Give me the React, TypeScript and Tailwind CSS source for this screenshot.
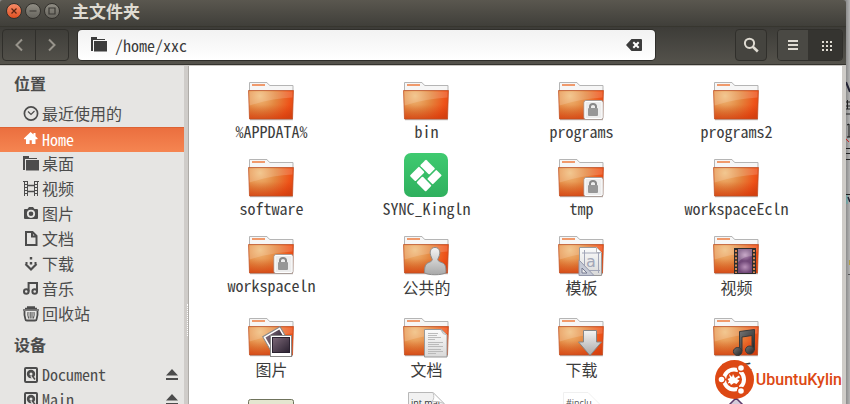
import { useState, type ReactNode } from 'react';

type SideIconName =
  | 'recent'
  | 'home'
  | 'folder'
  | 'film'
  | 'camera'
  | 'document'
  | 'download'
  | 'music'
  | 'trash'
  | 'disk';

type Emblem = 'lock' | 'person' | 'template' | 'film' | 'photos' | 'document' | 'download' | 'music';

interface FileEntry {
  name: string;
  cjk?: boolean;
  emblem?: Emblem;
  icon?: 'sync' | 'image' | 'source' | 'header' | 'diamond';
}

const places: { name: string; icon: SideIconName }[] = [
  { name: '最近使用的', icon: 'recent' },
  { name: 'Home', icon: 'home' },
  { name: '桌面', icon: 'folder' },
  { name: '视频', icon: 'film' },
  { name: '图片', icon: 'camera' },
  { name: '文档', icon: 'document' },
  { name: '下载', icon: 'download' },
  { name: '音乐', icon: 'music' },
  { name: '回收站', icon: 'trash' },
];

const devices = ['Document', 'Main'];

const files: FileEntry[] = [
  { name: '%APPDATA%' },
  { name: 'bin' },
  { name: 'programs', emblem: 'lock' },
  { name: 'programs2' },
  { name: 'software' },
  { name: 'SYNC_Kingln', icon: 'sync' },
  { name: 'tmp', emblem: 'lock' },
  { name: 'workspaceEcln' },
  { name: 'workspaceln', emblem: 'lock' },
  { name: '公共的', cjk: true, emblem: 'person' },
  { name: '模板', cjk: true, emblem: 'template' },
  { name: '视频', cjk: true, emblem: 'film' },
  { name: '图片', cjk: true, emblem: 'photos' },
  { name: '文档', cjk: true, emblem: 'document' },
  { name: '下载', cjk: true, emblem: 'download' },
  { name: '音乐', cjk: true, emblem: 'music' },
  { name: '', icon: 'image' },
  { name: '', icon: 'source' },
  { name: '', icon: 'header' },
  { name: '', icon: 'diamond' },
];

const sideIcons: Record<SideIconName, ReactNode> = {
  recent: (
    <g fill="none" stroke="currentColor">
      <circle cx="8" cy="7.500" r="6.600" strokeWidth="1.700" />
      <path d="M5 5.500l3 3L11.500 5" strokeWidth="1.200" />
    </g>
  ),
  home: <path d="M7.600 1L.8 7.600l.6.600H3V13h3.600V9.200h2.200V13h3.700V8.200h1.700l.6-.6L12.500 5.200V2h-2v1.400z" fill="currentColor" />,
  folder: (
    <g fill="currentColor">
      <path d="M0 0h6v2h8v1H2v11H0z" />
      <path d="M3 4h13v10.500H3z" />
    </g>
  ),
  film: (
    <g fill="none" stroke="currentColor">
      <path d="M1.500 0v15M4.500 0v15M11.500 0v15M14.500 0v15" />
      <path d="M0 .5h4M1 3.500h4M1 6.500h4M1 9.500h4M1 12.500h4M11 .5h5M11 3.500h4M11 6.500h4M11 9.500h4M11 12.500h4" />
      <path d="M5 4.500h6M5 10.500h6" strokeWidth="1.300" />
    </g>
  ),
  camera: (
    <g>
      <path d="M2 3h2.500L6 1h4l1.500 2H14q1 0 1 1v8q0 1-1 1H2q-1 0-1-1V4q0-1 1-1z" fill="currentColor" />
      <circle cx="8" cy="7.800" r="3.200" fill="currentColor" stroke="#e6e5e3" strokeWidth="1.800" />
    </g>
  ),
  document: <path d="M3 1h6.500l4 4v9H3zM9 1v4.500h4.500" fill="none" stroke="currentColor" strokeWidth="2" />,
  download: (
    <g>
      <path d="M2.500 8l5.500 5.500L13.500 8" fill="none" stroke="currentColor" strokeWidth="2.200" />
      <path d="M6.800 1h2.400v2.400H6.800zM6.800 6h2.400v2.600H6.800zM2.500 6h2v2h-2zM11.500 6h2v2h-2z" fill="currentColor" />
    </g>
  ),
  music: (
    <g fill="none" stroke="currentColor" strokeWidth="2">
      <circle cx="3.300" cy="10.500" r="2.300" />
      <circle cx="11.700" cy="10.500" r="2.300" />
      <path d="M5.600 10.500V2h8.400v8.500" />
    </g>
  ),
  trash: (
    <g fill="none" stroke="currentColor">
      <path d="M2 2.500h12M4 1h8" strokeWidth="1.600" />
      <path d="M0 4h16" strokeWidth="1.400" />
      <path d="M1.500 5q-.5 4 1 8.500 0 1 1.500 1h8q1.500 0 1.500-1 1.500-4.500 1-8.500" strokeWidth="1.800" />
      <path d="M5 6q-.6 3 .6 6.500M7.200 6v6.500M9 6v6.500M11 6q.6 3-.6 6.500" />
    </g>
  ),
  disk: (
    <g>
      <rect x="2" y="1" width="12" height="14" rx="1" fill="none" stroke="currentColor" strokeWidth="2" />
      <circle cx="8" cy="7" r="4.200" fill="currentColor" />
      <circle cx="8" cy="7" r="1.500" fill="#e6e5e3" />
      <path d="M8 9l4 4" stroke="#e6e5e3" strokeWidth="2" />
      <path d="M9 8.500l3 4" stroke="currentColor" strokeWidth="1.500" />
    </g>
  ),
};

function SideIcon({ name }: { name: SideIconName }) {
  return (
    <svg className="size-4 shrink-0" viewBox="0 0 16 16" aria-hidden="true">
      {sideIcons[name]}
    </svg>
  );
}

// Gradients shared by all of the file icons
function IconDefs() {
  return (
    <svg className="absolute size-0" aria-hidden="true">
      <defs>
        <radialGradient id="folder" gradientUnits="userSpaceOnUse" cx="12" cy="22" r="36">
          <stop offset="0" stopColor="#f0bd7c" />
          <stop offset=".45" stopColor="#e4863f" />
          <stop offset=".85" stopColor="#ee5218" />
          <stop offset="1" stopColor="#e04a15" />
        </radialGradient>
        <linearGradient id="shade" x1="0" y1="0" x2="0" y2="1">
          <stop offset=".5" stopColor="#c8360a" stopOpacity="0" />
          <stop offset="1" stopColor="#c8360a" stopOpacity=".55" />
        </linearGradient>
        <linearGradient id="paper" x1="0" y1="0" x2="0" y2="1">
          <stop offset="0" stopColor="#fbfbfb" />
          <stop offset="1" stopColor="#d9d9d9" />
        </linearGradient>
        <linearGradient id="metal" x1="0" y1="0" x2="0" y2="1">
          <stop offset="0" stopColor="#f4f4f4" />
          <stop offset="1" stopColor="#a8a8a8" />
        </linearGradient>
        <linearGradient id="note" x1="0" y1="0" x2="1" y2="1">
          <stop offset="0" stopColor="#777" />
          <stop offset="1" stopColor="#222" />
        </linearGradient>
        <linearGradient id="photo" x1="0" y1="0" x2="1" y2="1">
          <stop offset="0" stopColor="#7c6878" />
          <stop offset="1" stopColor="#2a2130" />
        </linearGradient>
        <radialGradient id="frame">
          <stop offset="0" stopColor="#b991b9" />
          <stop offset="1" stopColor="#714878" />
        </radialGradient>
        <linearGradient id="sync" x1="0" y1="0" x2="0" y2="1">
          <stop offset="0" stopColor="#3fca70" />
          <stop offset="1" stopColor="#2fb05e" />
        </linearGradient>
      </defs>
    </svg>
  );
}

const emblems: Record<Emblem, ReactNode> = {
  lock: (
    <g>
      <rect x="26" y="26.500" width="19" height="19" rx="2" fill="#ededed" stroke="#a99d98" />
      <rect x="27" y="27.500" width="17" height="17" rx="1" fill="none" stroke="#fff" />
      <path d="M32 35v-2.500q0-2.500 3-2.500t3 2.500V35" fill="none" stroke="#888" strokeWidth="2" />
      <rect x="30" y="34" width="10" height="8" rx="1" fill="#979797" />
    </g>
  ),
  person: (
    <path
      d="M32 19.500c3.500 0 5 2.800 4.700 6-.2 2.800-1.500 4.300-2 6 .3 2 2.500 2.300 5 3.500 2.500 1.200 3.300 3.500 3.300 9.500-3 3-19.500 3-21.500 0 0-6 1-8.300 3.300-9.500 2.500-1.200 4.200-1.500 4.500-3.500-.5-1.700-1.700-3.200-2-6-.3-3.200 1.200-6 4.700-6z"
      fill="url(#metal)"
      stroke="#8c8c8c"
    />
  ),
  template: (
    <g>
      <path d="M21.500 19.500h17l5 5v23h-22z" fill="url(#paper)" stroke="#9a9a9a" />
      <path d="M38.500 19.500v5h5" fill="#fff" stroke="#bbb" />
      <path d="M24 25h18M24 42.500h18M26.500 22v22M40.500 24v21" stroke="#a2a6b8" fill="none" />
      <text x="28" y="39" fontSize="16" fontFamily="DejaVu Sans, sans-serif" fill="#a2a6b8">a</text>
      <path d="M21 32v15.500h15z" fill="#c5c9d5" stroke="#9397aa" />
      <path d="M24 40v5h5z" fill="#eee" stroke="#777b91" />
    </g>
  ),
  film: (
    <g>
      <rect x="21" y="20" width="22" height="26" fill="#2d2d2d" />
      <rect x="25" y="21" width="14" height="12" fill="url(#frame)" />
      <rect x="25" y="33" width="14" height="12" fill="url(#frame)" />
      <path d="M23 22v23M41 22v23" stroke="#d98550" strokeWidth="2" strokeDasharray="2 1.600" />
      <path d="M25 21h14v7q-8 0-14 6z" fill="#fff" opacity=".22" />
    </g>
  ),
  photos: (
    <g>
      <g transform="rotate(-30 27 30)">
        <rect x="18" y="21" width="20" height="19" fill="#fff" stroke="#888" />
        <rect x="20" y="23" width="16" height="14" fill="url(#photo)" />
      </g>
      <rect x="22.500" y="25.500" width="21" height="21" fill="#fff" stroke="#888" />
      <rect x="24.500" y="27.500" width="17" height="15" fill="url(#photo)" stroke="#2a2130" />
    </g>
  ),
  document: (
    <g>
      <path d="M21.500 19.500h17l5.500 5.500v22H21.500z" fill="url(#paper)" stroke="#999" />
      <path d="M38 20q1 4.500 6 5l-6-5z" fill="#fff" stroke="#bbb" />
      <path d="M25 23.500h10M25 25.500h9M25 27.500h13M25 29.500h7M25 32.500h15M25 34.500h11M25 36.500h15M25 39.500h13M25 41.500h15M25 43.500h8" stroke="#b4b4b4" strokeWidth=".9" />
    </g>
  ),
  download: <path d="M25.500 20.500h13v11.500h5L32 45.500 20.500 32h5z" fill="url(#metal)" stroke="#868686" />,
  music: (
    <g fill="url(#note)" stroke="#3a3a3a">
      <path d="M26.500 21.500l15-2V40h-2.500V25.500l-10 1.500v14h-2.500z" />
      <ellipse cx="24.700" cy="41.500" rx="4.300" ry="4" />
      <ellipse cx="36.800" cy="40" rx="4.300" ry="4" />
    </g>
  ),
};

function FolderIcon({ emblem }: { emblem?: Emblem }) {
  return (
    <svg className="h-12 w-[47px]" viewBox="0 0 47 48" aria-hidden="true">
      <path d="M1.500 17V8.500h17.500q1.500 2.500 3 3h23V17z" fill="#f6f6f6" stroke="#b5b5b5" />
      <rect x="4" y="10" width="13" height="2" fill="#f09a6c" />
      <path d="M2 45.500h43" stroke="#000" strokeOpacity=".25" strokeWidth="1.500" />
      <path d="M.5 16.500h45l-1 28.500h-43z" fill="url(#folder)" />
      <path d="M.5 16.500h45l-1 28.500h-43z" fill="url(#shade)" stroke="#bd4d22" strokeOpacity=".7" />
      <path d="M1.500 17.500h43v6q-21 1-43 8z" fill="#fff" opacity=".16" />
      {emblem && emblems[emblem]}
    </svg>
  );
}

function SpecialIcon({ icon }: { icon: NonNullable<FileEntry['icon']> }) {
  return (
    <svg className="h-12 w-[47px]" viewBox="0 0 47 48" aria-hidden="true">
      {icon === 'sync' && (
        <g>
          <rect x="1" y="2" width="44" height="44" rx="7" fill="url(#sync)" />
          <g transform="rotate(45 23 24)" fill="#fff">
            <rect x="12" y="13" width="13" height="8.500" rx="1" />
            <rect x="26.500" y="13" width="8" height="13" rx="1" />
            <rect x="12" y="23" width="8" height="13" rx="1" />
            <rect x="21.500" y="27.500" width="13" height="8.500" rx="1" />
          </g>
        </g>
      )}
      {icon === 'image' && <rect x=".5" y="7.500" width="45" height="40" rx="2" fill="#e4e6d0" stroke="#6f735c" />}
      {icon === 'source' && (
        <g>
          <path d="M5.500 48V.5H30L41 11.500V48z" fill="#f1f1f1" stroke="#b8b8b8" />
          <text x="8" y="14" fontSize="9" fontFamily="Open Sans, sans-serif" fill="#333">int mai</text>
          <path d="M30 .5q2 6-1 9 6-1 12 2z" fill="#fff" stroke="#c4c4c4" />
        </g>
      )}
      {icon === 'header' && (
        <g>
          <path d="M5.500 48V.5H30L41 11.500V48z" fill="#fff" stroke="#f0f0f0" />
          <text x="8" y="14" fontSize="9" fontFamily="Open Sans, sans-serif" fill="#555">#inclu</text>
        </g>
      )}
      {icon === 'diamond' && <path d="M23 6l17 17-17 17L6 23z" fill="#d5cbda" stroke="#5c3b6b" strokeWidth="1.500" />}
    </svg>
  );
}

function WindowButton({ label, close, children }: { label: string; close?: boolean; children: ReactNode }) {
  return (
    <button
      type="button"
      aria-label={label}
      className={
        close
          ? 'flex size-4 items-center justify-center rounded-full border border-[#33312d] bg-linear-to-b from-[#f58a66] to-[#e2501d] text-[#5b2411]'
          : 'flex size-4 items-center justify-center rounded-full border border-[#33312d] bg-linear-to-b from-[#908d84] to-[#67655e] text-[#3b3935]'
      }
    >
      <svg className="size-3.5 shrink-0" viewBox="0 0 14 14" fill="none" stroke="currentColor" strokeWidth="1.200">
        {children}
      </svg>
    </button>
  );
}

function TitleBar() {
  return (
    <header className="flex h-[26px] items-center gap-[3px] bg-linear-to-b from-[#5a574f] to-[#403f3a] pb-1 pl-[6px]">
      <WindowButton label="关闭" close>
        <path d="M4.500 4.500l5 5M9.500 4.500l-5 5" />
      </WindowButton>
      <WindowButton label="最小化">
        <path d="M3.500 7h7" />
      </WindowButton>
      <WindowButton label="最大化">
        <path d="M4 4h6v6H4z" />
      </WindowButton>
      <h1 className="ml-[9px] text-[17px] leading-[22px] font-bold text-[#dfdbd2]">主文件夹</h1>
    </header>
  );
}

function Toolbar() {
  const [path, setPath] = useState('/home/xxc');

  return (
    <div className="flex h-10 items-center border-t border-b border-t-[#37362f] border-b-[#c9c6c2] bg-linear-to-b from-[#3d3c38] to-[#55534c] pr-[3px] pb-0.5 pl-[2px] shadow-[inset_0_-1px_#35342f]">
      <div className="flex h-8 w-[67px] rounded-sm border border-[#302f2b] text-[#98948c]">
        <button type="button" aria-label="后退" className="flex flex-1 items-center justify-center border-r border-[#302f2b]">
          <svg className="size-4" viewBox="0 0 16 16" fill="none" stroke="currentColor" strokeWidth="2">
            <path d="M11 2.500L5.500 8l5.500 5.500" />
          </svg>
        </button>
        <button type="button" aria-label="前进" className="flex flex-1 items-center justify-center">
          <svg className="size-4" viewBox="0 0 16 16" fill="none" stroke="currentColor" strokeWidth="2">
            <path d="M5 2.500L10.500 8 5 13.500" />
          </svg>
        </button>
      </div>

      <div className="mr-20 ml-[9px] flex h-[30px] flex-1 items-center gap-2 rounded-sm bg-linear-to-b from-[#f2f2f2] to-white pr-[13px] pl-[13px] text-[#3c3c3c] shadow-[0_0_0_1px_#2f2e2a]">
        <SideIcon name="folder" />
        <input
          type="text"
          aria-label="位置"
          value={path}
          onChange={(e) => setPath(e.target.value)}
          className="min-w-0 flex-1 bg-transparent font-[Noto_Sans_Mono_CJK_SC,Liberation_Mono,monospace] text-[16px] leading-6 outline-none"
        />
        <button type="button" aria-label="清除" onClick={() => setPath('')}>
          <svg className="h-3 w-4" viewBox="0 0 16 12">
            <path d="M0 6l5.500-6H15q1 0 1 1v10q0 1-1 1H5.500z" fill="currentColor" />
            <path d="M7.300 3.300l5.400 5.400M12.700 3.300L7.300 8.700" stroke="#fff" strokeWidth="2" />
          </svg>
        </button>
      </div>

      <button type="button" aria-label="搜索" className="mr-[10px] flex h-8 w-8 items-center justify-center rounded-sm border border-[#302f2b] bg-[#45443f] text-[#dfdbd2]">
        <svg className="size-4 shrink-0" viewBox="0 0 16 16" fill="none" stroke="currentColor">
          <circle cx="6.500" cy="6.300" r="4.600" strokeWidth="2" />
          <path d="M9.800 9.800l5 4.700" strokeWidth="2.600" />
        </svg>
      </button>

      <div className="flex h-8 w-[66px] overflow-hidden rounded-sm border border-[#302f2b] text-[#dfdbd2]">
        <button type="button" aria-label="列表视图" className="flex flex-1 items-center justify-center bg-[#4a4944]">
          <svg className="h-[10px] w-[10px]" viewBox="0 0 10 10" fill="currentColor">
            <path d="M0 0h10v2H0zM0 4h10v2H0zM0 8h10v2H0z" />
          </svg>
        </button>
        <button type="button" aria-label="图标视图" aria-pressed="true" className="flex flex-1 items-center justify-center bg-[#353430] pt-0.5 pl-1">
          <svg className="h-[10px] w-[10px]" viewBox="0 0 10 10" fill="currentColor">
            <path d="M0 0h2v2H0zM4 0h2v2H4zM8 0h2v2H8zM0 4h2v2H0zM4 4h2v2H4zM8 4h2v2H8zM0 8h2v2H0zM4 8h2v2H4zM8 8h2v2H8z" />
          </svg>
        </button>
      </div>
    </div>
  );
}

function Sidebar() {
  return (
    <aside className="w-[184px] shrink-0 overflow-hidden bg-[#e6e5e3] text-[#4c4c4c]">
      <h2 className="flex h-9 items-center pb-0.5 pl-[14px] text-[16px] font-bold">位置</h2>
      <nav>
        {places.map((place) => (
          <a
            key={place.name}
            href="#"
            className={
              place.name === 'Home'
                ? 'flex h-[25px] items-center gap-[3px] border-t border-[#dd6334] bg-linear-to-b from-[#eb6f3f] to-[#f58551] pb-0.5 pl-[23px] text-[16px] leading-[23px] text-white'
                : 'flex h-[25px] items-center gap-[3px] pb-0.5 pl-[23px] text-[16px] leading-[23px]'
            }
          >
            <SideIcon name={place.icon} />
            <span>{place.name}</span>
          </a>
        ))}
      </nav>
      <h2 className="flex h-9 items-center pb-0.5 pl-[14px] text-[16px] font-bold">设备</h2>
      {devices.map((device) => (
        <div key={device} className="flex h-[25px] items-center gap-[3px] pr-[6px] pb-0.5 pl-[23px] text-[16px] leading-[23px]">
          <SideIcon name="disk" />
          <a href="#" className="flex-1">{device}</a>
          <button type="button" aria-label={`弹出 ${device}`} className="flex">
            <svg className="h-[11px] w-3" viewBox="0 0 12 11" fill="currentColor">
              <path d="M6 0l6 6.500H0zM0 9h12v2H0z" />
            </svg>
          </button>
        </div>
      ))}
    </aside>
  );
}

function Watermark() {
  return (
    <div className="absolute right-0 bottom-[5px] flex items-center gap-0.5 text-[#dd4814]">
      <svg className="size-[39px]" viewBox="0 0 39 39" aria-hidden="true">
        <circle cx="19.500" cy="19.500" r="19.500" fill="currentColor" />
        <circle cx="19" cy="19.500" r="10" fill="none" stroke="#fff" strokeWidth="4" />
        <path d="M19 19.500H3M19 19.500L27 6M19 19.500L27 33" stroke="currentColor" strokeWidth="1.600" />
        <g fill="#fff" stroke="currentColor" strokeWidth="1.400">
          <circle cx="6.500" cy="19.500" r="3.500" />
          <circle cx="26" cy="8" r="3.500" />
          <circle cx="26" cy="31" r="3.500" />
        </g>
        <circle cx="19" cy="19.500" r="7.200" fill="currentColor" />
        <path
          d="M14 14l3 3 1-3 2 4 4-2.500 1 2-3 1.500 2.500 1.500-3 3.500-2.500-1-3 2-1-2-2.500.5 1.500-2.500-1.500-2 2.500-1z"
          fill="#fff"
        />
      </svg>
      <span className="font-[Roboto,sans-serif] text-[16px] leading-5 font-medium">UbuntuKylin</span>
    </div>
  );
}

// Sliver of the text editor window that sits behind the file manager
function BackgroundWindow() {
  return (
    <div className="w-1 shrink-0 overflow-hidden bg-linear-to-r from-[#8c8c8c] to-[#b4b4b4]" aria-hidden="true">
      <svg className="h-[404px] w-1" viewBox="0 0 4 404">
        <path d="M0 82l4 10" stroke="#223" strokeWidth="2" />
        <path d="M0 102h4M0 106h4M0 109h4M1.500 100v9M0 114h4" stroke="#222" />
        <path d="M1 125l2-1v13M1 137h3" stroke="#111" fill="none" />
        <path d="M0 139l3 3" stroke="#c22" />
        <path d="M0 148.500h4M0 153.500h4M0 159.500h4M0 194.500h4" stroke="#222" />
        <path d="M1 195v9" stroke="#5aa" />
        <path d="M2 197l2 5" stroke="#223" strokeWidth="1.500" />
        <path d="M3 260h1v5H3z" fill="#b4a040" />
        <path d="M2 274.500h2" stroke="#555" />
      </svg>
    </div>
  );
}

export default function App() {
  return (
    <div className="flex h-screen overflow-hidden bg-[#8c8c8c] font-[Noto_Sans_Mono_CJK_SC,Noto_Sans_CJK_SC,sans-serif]">
      <IconDefs />
      <div className="flex min-w-0 flex-1 flex-col overflow-hidden rounded-t-[3px]">
        <TitleBar />
        <Toolbar />
        <div className="flex min-h-0 flex-1">
          <Sidebar />
          <div className="flex w-[5px] shrink-0 items-center justify-end border-r border-[#aeaba7] bg-[#cfccc9] pt-[170px]">
            <div className="h-8 border-r border-dotted border-white" />
          </div>
          <main className="relative min-w-0 flex-1 overflow-hidden border-r-4 border-[#cfccc8] bg-white">
            <div className="grid grid-cols-4 items-start gap-y-[9px] pt-2 pr-7 pl-[5px]">
              {files.map((file, i) => (
                <button key={i} type="button" className="flex flex-col items-center text-[16px] text-[#3c3c3c]">
                  {file.icon ? <SpecialIcon icon={file.icon} /> : <FolderIcon emblem={file.emblem} />}
                  <span className={file.cjk ? 'pb-0.5 leading-[23px]' : 'pb-0.5 leading-[18px]'}>{file.name}</span>
                </button>
              ))}
            </div>
            <Watermark />
          </main>
        </div>
      </div>
      <BackgroundWindow />
    </div>
  );
}
